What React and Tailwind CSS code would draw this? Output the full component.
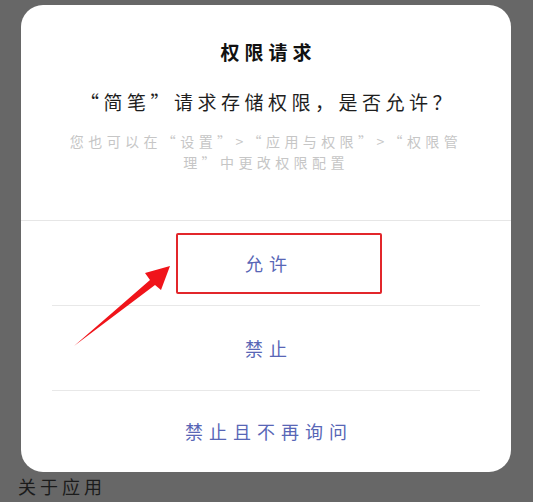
export default function App() {
  const font = { fontFamily: '"Noto Sans CJK SC", "Noto Sans", sans-serif' }

  return (
    <div
      className="relative w-[533px] h-[502px] bg-[#676767] overflow-hidden flex flex-col"
      style={font}
    >
      <div className="relative ml-[21px] mt-[5px] w-[490px] h-[467px] rounded-[22px] bg-white flex flex-col">
        <div className="flex flex-col items-center pt-[35px]">
          <h1 className="text-[19px] leading-[24px] font-bold text-[#111] tracking-[5px] pl-[5px]">权限请求</h1>
          <p className="mt-[25px] text-[19px] leading-[26px] text-[#1e1e1e] tracking-[4.5px] pl-[4px]">
            “简笔”请求存储权限，是否允许？
          </p>
          <p className="mt-[16px] text-center text-[14px] leading-[21px] text-[#c6c6c6] tracking-[4.4px]">
            您也可以在“设置”&gt;“应用与权限”&gt;“权限管
            <br />
            理”中更改权限配置
          </p>
        </div>

        <div className="mt-auto border-t border-[#e6e6e6]">
          <div className="relative h-[84px] flex items-center justify-center">
            <span className="text-[18px] text-[#5866b6] tracking-[6px] pl-[6px]">允许</span>
            <div className="absolute left-[155px] top-[12px] w-[206px] h-[61px] border-2 border-[#e2262b] rounded-[2px]" />
          </div>
          <div className="mx-[31px] border-t border-[#e8e8e8]" />
          <div className="h-[84px] flex items-center justify-center">
            <span className="text-[18px] text-[#5866b6] tracking-[6px] pl-[6px]">禁止</span>
          </div>
          <div className="mx-[31px] border-t border-[#e8e8e8]" />
          <div className="h-[81px] flex items-center justify-center">
            <span className="text-[18px] text-[#5866b6] tracking-[6px] pl-[6px]">禁止且不再询问</span>
          </div>
        </div>
      </div>

      <p className="ml-[18px] mt-[2px] text-[18px] leading-[24px] text-[#1b1b1b] tracking-[4px]">关于应用</p>

      <svg className="absolute left-0 top-0 pointer-events-none" width="533" height="502" viewBox="0 0 533 502">
        <polygon points="74,346 150,280 145,273 170,266 161,290 155,285" fill="#f0141a" />
      </svg>
    </div>
  )
}
